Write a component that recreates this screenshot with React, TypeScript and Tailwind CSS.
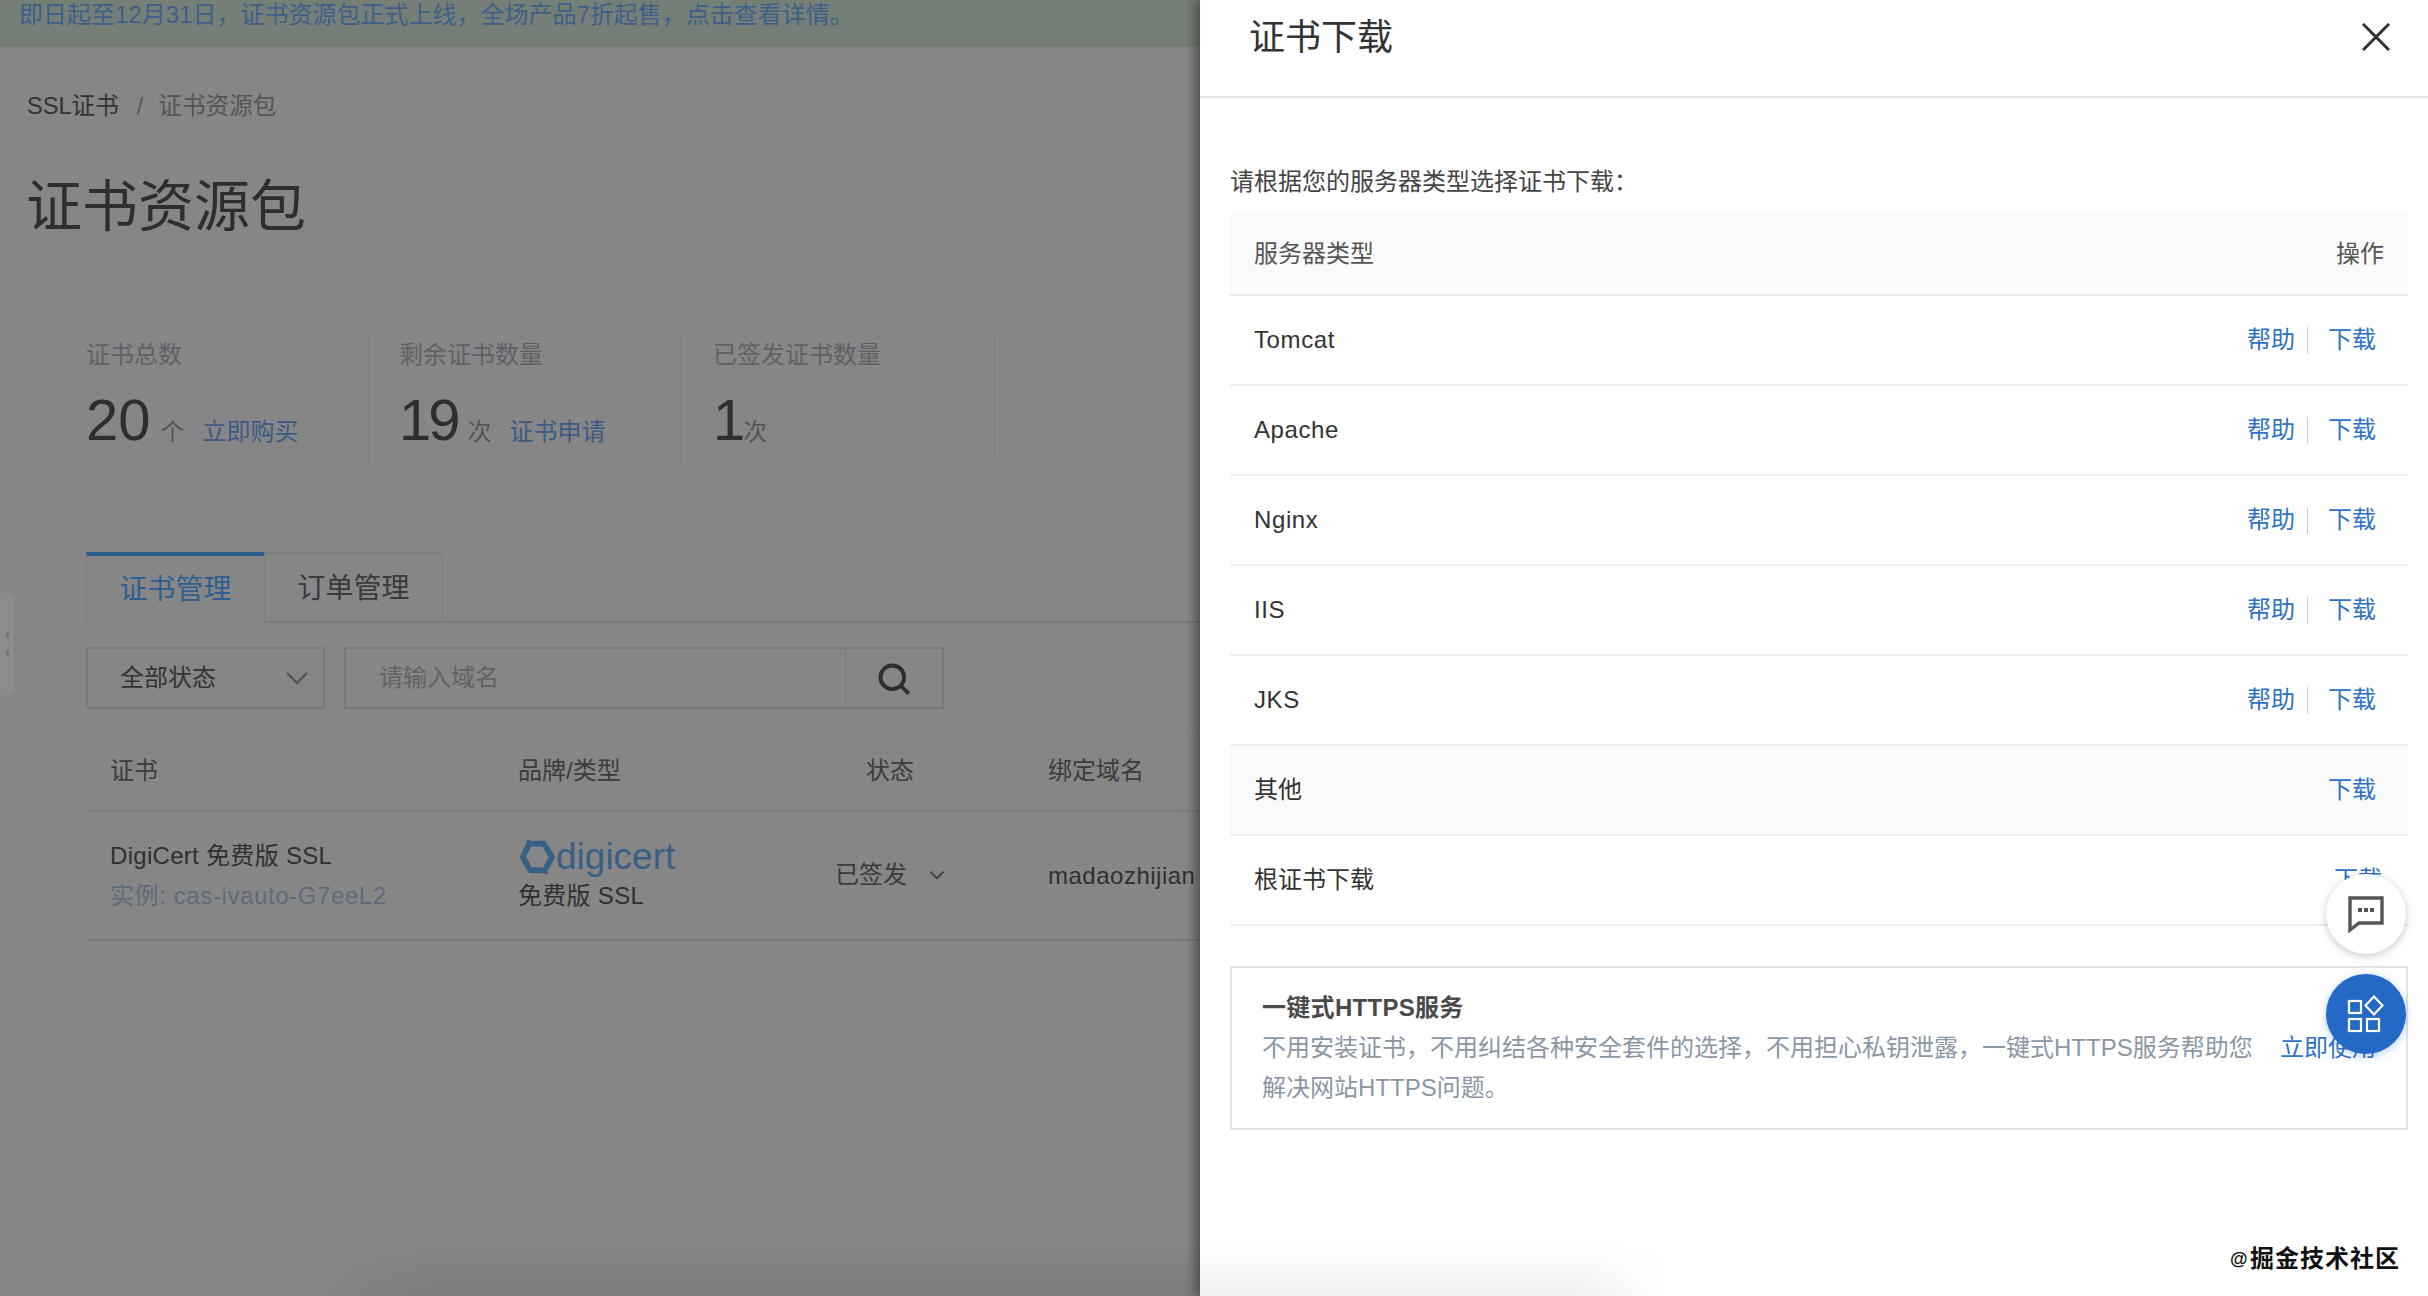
const FONT = "[font-family:'Liberation_Sans','Noto_Sans_CJK_SC',sans-serif]";

function Chevron({ className }: { className: string }) {
  return (
    <svg viewBox="0 0 24 14" fill="none" stroke="currentColor" strokeWidth="2.4" className={className}>
      <path d="M2 2 L12 12 L22 2" />
    </svg>
  );
}

function Ring() {
  return (
    <svg viewBox="0 0 40 40" fill="none" className="w-[38px] h-[38px] shrink-0">
      <path d="M12 6 H27 L36 20 L28 34 H13 L5 20 Z" stroke="#3a5f85" strokeWidth="6" strokeLinejoin="round" />
      <path d="M9 3 L24 8 M31 37 L16 32" stroke="#3a5f85" strokeWidth="3" />
    </svg>
  );
}

const servers = ["Tomcat", "Apache", "Nginx", "IIS", "JKS"];

function Stat({
  label,
  num,
  unit,
  link,
  unitGap,
  numClass,
  className,
}: {
  label: string;
  num: string;
  unit: string;
  link?: string;
  unitGap: string;
  numClass?: string;
  className: string;
}) {
  return (
    <div className={`h-[127px] border-r border-[#7c7c7c] pt-[8px] ${className}`}>
      <div className="text-[24px] leading-[24px] text-[#5d6267]">{label}</div>
      <div className="flex items-baseline mt-[24px]">
        <span className={`text-[58px] leading-[58px] text-[#2e2e2e] ${numClass ?? ""}`}>{num}</span>
        <span className={`text-[24px] leading-[24px] text-[#565656] ${unitGap}`}>{unit}</span>
        {link && <span className="text-[24px] leading-[24px] text-[#3c5a84] ml-[18px]">{link}</span>}
      </div>
    </div>
  );
}

export default function App() {
  return (
    <div className={`relative flex w-[2428px] h-[1296px] overflow-hidden bg-white ${FONT}`}>
      <div className="relative w-[1200px] h-full shrink-0 bg-[#868686] overflow-hidden">
        <div className="h-[47px] bg-[#767f77] pl-[19px] text-[24px] leading-[30px] text-[#3f5f88] whitespace-nowrap">
          即日起至12月31日，证书资源包正式上线，全场产品7折起售，点击查看详情。
        </div>

        <div className="mt-[44px] pl-[27px] flex items-center h-[32px] text-[23.6px] text-[#333333]">
          <span>SSL证书</span>
          <span className="ml-[18px] text-[#5a5a5a]">/</span>
          <span className="ml-[15px] text-[#555555]">证书资源包</span>
        </div>

        <div className="mt-[52px] pl-[26px] h-[64px] text-[56px] leading-[64px] text-[#2e2e2e]">证书资源包</div>

        <div className="mt-[96px] ml-[86px] flex">
          <Stat className="w-[283px]" label="证书总数" num="20" unit="个" link="立即购买" unitGap="ml-[10px]" />
          <Stat className="w-[312px] pl-[30px]" label="剩余证书数量" num="19" unit="次" link="证书申请" numClass="tracking-[-3px]" unitGap="ml-[10px]" />
          <Stat className="w-[314px] pl-[32px]" label="已签发证书数量" num="1" unit="次" unitGap="-ml-[2px]" />
        </div>

        <div className="mt-[90px] ml-[86px] flex items-start h-[71px] border-b-2 border-[#7a7a7a]">
          <div className="h-[71px] w-[178px] border-t-4 border-l border-[#7c7c7c] border-t-[#2c5d8f] bg-[#868686] flex items-center justify-center text-[28px] text-[#2f5f92]">
            证书管理
          </div>
          <div className="h-[69px] w-[179px] border-t-2 border-x border-[#7c7c7c] pt-[2px] flex items-center justify-center text-[28px] text-[#3a3a3a]">
            订单管理
          </div>
        </div>

        <div className="mt-[24px] ml-[86px] flex">
          <div className="w-[239px] h-[62px] border-2 border-[#7a7a7a] flex items-center justify-between pl-[32px] pr-[14px] text-[24px] text-[#333333]">
            <span>全部状态</span>
            <Chevron className="w-[24px] h-[14px] text-[#555555]" />
          </div>
          <div className="ml-[19px] w-[600px] h-[62px] border-2 border-[#7a7a7a] flex items-center">
            <div className="flex-1 pl-[33px] text-[24px] text-[#636363]">请输入域名</div>
            <div className="w-[97px] h-full border-l border-[#7a7a7a] flex items-center justify-center pt-[2px]">
              <svg viewBox="0 0 32 32" fill="none" stroke="#2e2e2e" strokeWidth="3.4" className="w-[36px] h-[36px]">
                <circle cx="14.5" cy="14.5" r="10.5" />
                <path d="M22 22 L29 29" />
              </svg>
            </div>
          </div>
        </div>

        <div className="mt-[26px] ml-[86px]">
          <div className="flex items-center h-[77px] pb-[5px] border-t border-b-2 border-[#7c7c7c] border-t-[#808080] text-[24px] text-[#3c3c3c]">
            <div className="w-[432px] pl-[24px]">证书</div>
            <div className="w-[317px]">品牌/类型</div>
            <div className="w-[213px] pl-[31px]">状态</div>
            <div className="whitespace-nowrap">绑定域名</div>
          </div>
          <div className="flex items-center h-[129px] border-b-2 border-[#7c7c7c] text-[24px]">
            <div className="w-[432px] pl-[24px]">
              <div className="leading-[40px] text-[#303030] tracking-[0.3px]">DigiCert 免费版 SSL</div>
              <div className="leading-[40px] text-[#5e6b7d] tracking-[0.6px]">实例: cas-ivauto-G7eeL2</div>
            </div>
            <div className="w-[317px]">
              <div className="flex items-center h-[44px] -mt-[4px]">
                <Ring />
                <span className="text-[37px] leading-[40px] text-[#3a5f85]">digicert</span>
                <span className="text-[11px] leading-[11px] self-start text-[#7b7f84]">®</span>
              </div>
              <div className="leading-[34px] text-[#303030] tracking-[0.3px]">免费版 SSL</div>
            </div>
            <div className="w-[213px] flex items-center text-[#3a3a3a] -mt-[2px]">
              <span>已签发</span>
              <Chevron className="ml-[22px] w-[16px] h-[10px] text-[#3a3a3a]" />
            </div>
            <div className="whitespace-nowrap text-[#303030] tracking-[0.5px]">madaozhijian</div>
          </div>
        </div>

        <div className="absolute left-0 top-[593px] w-[14px] h-[102px] rounded-r-[6px] bg-[#8c8c8c] flex flex-col items-center justify-center gap-[12px]">
          <span className="w-[3px] h-[6px] bg-[#757575]" />
          <span className="w-[3px] h-[6px] bg-[#757575]" />
        </div>

        <div className="absolute left-[300px] right-0 bottom-0 h-[56px] bg-gradient-to-t from-[#00000012] to-transparent [mask-image:linear-gradient(to_right,transparent,black_15%)]" />
      </div>

      <div className="relative z-10 flex-1 h-full bg-white shadow-[-5px_0_10px_rgba(0,0,0,0.4)]">
        <div className="h-[98px] border-b-2 border-[#e4e4e4]">
          <div className="h-[76px] flex items-center justify-between pl-[49px] pr-[38px]">
            <span className="text-[36px] text-[#333333]">证书下载</span>
            <svg viewBox="0 0 28 28" fill="none" stroke="#333333" strokeWidth="3" className="w-[28px] h-[28px] -mt-[2px]">
              <path d="M1 1 L27 27 M27 1 L1 27" />
            </svg>
          </div>
        </div>

        <div className="ml-[30px] w-[1178px]">
          <div className="mt-[68px] h-[32px] text-[24px] leading-[32px] text-[#444444]">请根据您的服务器类型选择证书下载：</div>

          <div className="mt-[16px] h-[82px] bg-[#fafafa] border-b-2 border-[#ececec] flex items-center justify-between pl-[24px] pr-[24px] text-[24px] text-[#555555]">
            <span>服务器类型</span>
            <span>操作</span>
          </div>

          {servers.map((s) => (
            <div key={s} className="h-[90px] border-b-2 border-[#eeeeee] flex items-center justify-between pl-[24px] pr-[32px] text-[24px]">
              <span className="text-[#333333] tracking-[0.6px]">{s}</span>
              <div className="flex items-center text-[#2f72c2]">
                <span>帮助</span>
                <span className="ml-[12px] mr-[20px] w-px h-[27px] bg-[#cfcfcf]" />
                <span>下载</span>
              </div>
            </div>
          ))}

          <div className="h-[90px] bg-[#fafafa] border-b-2 border-[#eeeeee] flex items-center justify-between pl-[24px] pr-[32px] text-[24px]">
            <span className="text-[#333333]">其他</span>
            <span className="text-[#2f72c2]">下载</span>
          </div>
          <div className="h-[90px] border-b-2 border-[#eeeeee] flex items-center justify-between pl-[24px] pr-[26px] text-[24px]">
            <span className="text-[#333333]">根证书下载</span>
            <span className="text-[#2f72c2]">下载</span>
          </div>

          <div className="mt-[40px] h-[164px] border-2 border-[#e2e2e2] pl-[30px] pt-[24px]">
            <div className="h-[32px] text-[24px] leading-[32px] font-bold text-[#4a4a4a] tracking-[0.3px]">一键式HTTPS服务</div>
            <div className="mt-[4px] flex items-start text-[24px] leading-[40px]">
              <div className="w-[1000px] text-[#8b96a5]">
                不用安装证书，不用纠结各种安全套件的选择，不用担心私钥泄露，一键式HTTPS服务帮助您解决网站HTTPS问题。
              </div>
              <span className="ml-[18px] text-[#2f72c2] whitespace-nowrap">立即使用</span>
            </div>
          </div>
        </div>

        <div className="absolute left-[1126px] top-[874px] w-[80px] h-[80px] rounded-full bg-white shadow-[0_2px_8px_rgba(0,0,0,0.22)] flex items-center justify-center">
          <svg viewBox="0 0 38 38" fill="none" className="w-[38px] h-[38px]">
            <path d="M3 3 H35 V28 H12 L3 35 Z" stroke="#555555" strokeWidth="3.4" />
            <path d="M11 13 h4 v4 h-4 Z M17 13 h4 v4 h-4 Z M23 13 h4 v4 h-4 Z" fill="#555555" />
          </svg>
        </div>
        <div className="absolute left-[1126px] top-[974px] w-[80px] h-[80px] rounded-full bg-[#2369c5] shadow-[0_2px_8px_rgba(35,105,197,0.35)] flex items-center justify-center">
          <svg viewBox="0 0 38 38" fill="none" stroke="white" strokeWidth="2.2" className="w-[38px] h-[38px]">
            <rect x="2" y="6" width="12" height="12" />
            <path d="M27 1.5 L35.5 10.5 L27 19.5 L18.5 10.5 Z" />
            <rect x="2" y="24" width="12" height="12" />
            <rect x="20" y="24" width="12" height="12" />
          </svg>
        </div>

        <div className="absolute left-[1030px] top-[1243px] flex items-center text-[24px] leading-[32px] font-bold text-[#111111] whitespace-nowrap">
          <span className="text-[18px] w-[20px]">@</span>
          <span className="tracking-[1px]">掘金技术社区</span>
        </div>

        <div className="absolute left-0 bottom-0 w-[470px] h-[56px] bg-gradient-to-t from-[#f0f0f0] to-white [mask-image:linear-gradient(to_right,black_80%,transparent)]" />
      </div>
    </div>
  );
}
